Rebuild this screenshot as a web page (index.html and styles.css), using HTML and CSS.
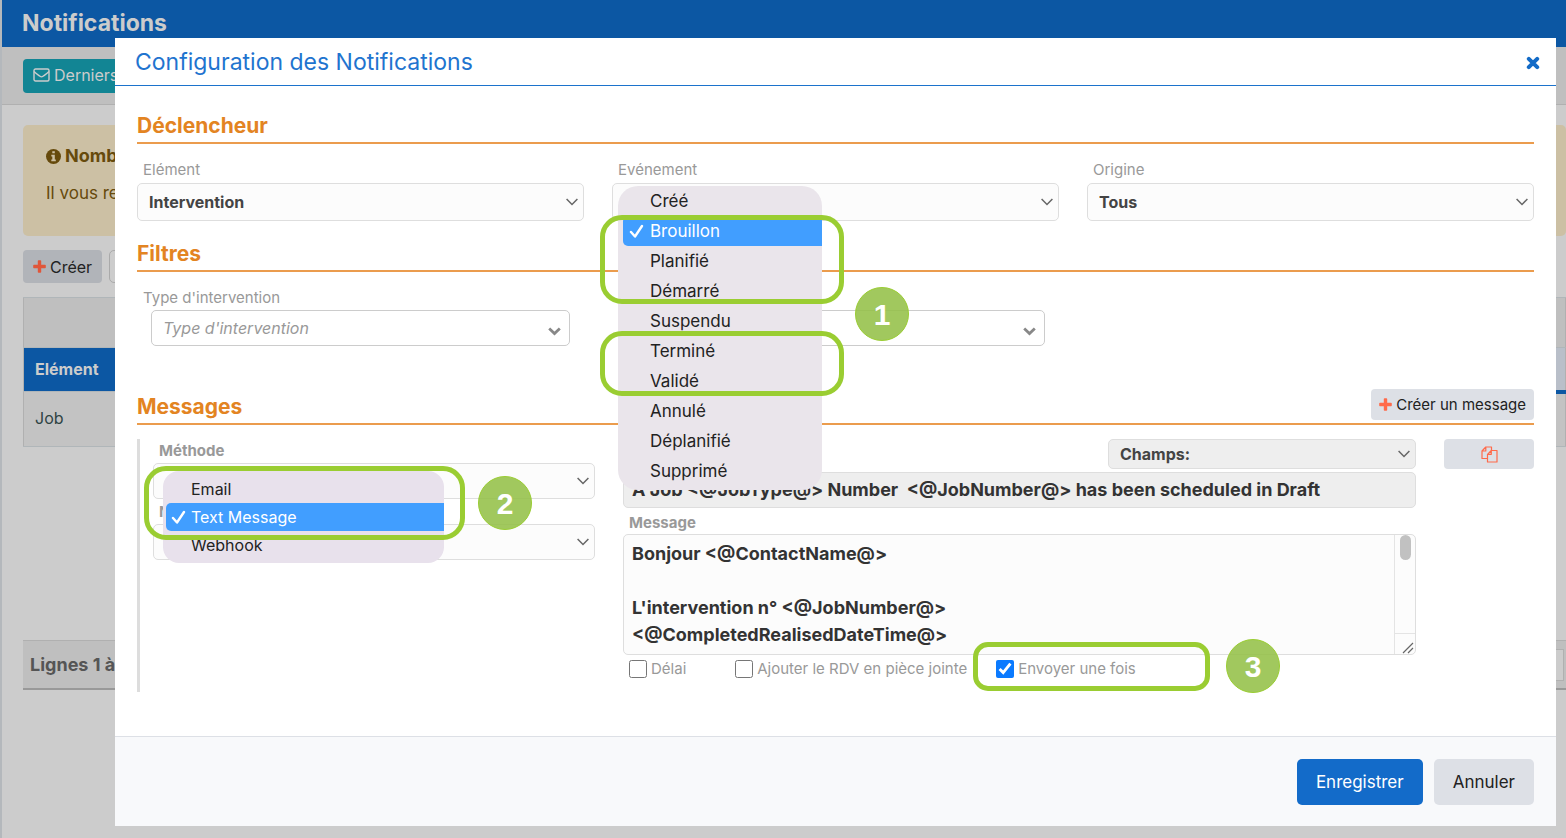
FILE: index.html
```
<!DOCTYPE html>
<html lang="fr">
<head>
  <meta charset="UTF-8" />
  <meta name="viewport" content="width=device-width, initial-scale=1" />
  <title>Notifications</title>
  <link rel="stylesheet" href="styles.css">
</head>
<body>

  <div class="page">
    <header class="page-header">
      <h1>Notifications</h1>
    </header>

    <div class="toolbar">
      <button type="button" class="btn-info">
        <svg width="17" height="14" viewBox="0 0 17 14" fill="none" stroke="currentColor" stroke-width="1.4">
          <rect x="1" y="1" width="15" height="12" rx="1.5" />
          <path d="M1 3.5C3 5.5 5 6.800 7 8.300c1 .8 2 .8 3 0C12 6.800 14 5.500 16 3.500" />
        </svg>
        Derniers
      </button>
    </div>

    <main class="page-main">
      <div class="alert">
        <p class="alert-title">
          <svg width="15" height="15" viewBox="0 0 15 15">
            <circle cx="7.500" cy="7.500" r="7.500" fill="currentColor" />
            <path d="M6.300 2.300h2.500v2H6.300zM5.300 5.700h3.500v4.800h1v1.800H5.300v-1.800h1V7.400h-1z" fill="#ccc0a4" />
          </svg>
          Nombre
        </p>
        <p>Il vous reste</p>
      </div>

      <div class="actions">
        <button type="button" class="btn-grey">
          <svg class="plus" width="13" height="13" viewBox="0 0 13 13"><path d="M4.800 1q0-.8.8-.8h1.800q.8 0 .8.8v3.800H12q.8 0 .8.800v1.800q0 .8-.8.8H8.200V12q0 .8-.8.8H5.600q-.8 0-.8-.8V8.200H1q-.8 0-.8-.8V5.600q0-.8.8-.8h3.800z" /></svg>
          Créer
        </button>
        <input type="search" class="search" aria-label="Rechercher">
      </div>

      <table class="list">
        <thead>
          <tr class="list-top"><td colspan="2"></td></tr>
          <tr><th>Elément</th><th class="list-last"></th></tr>
        </thead>
        <tbody>
          <tr><td>Job</td><td></td></tr>
        </tbody>
      </table>

      <div class="list-footer">
        <span>Lignes 1 à</span>
        <span class="pager"></span>
      </div>
    </main>
  </div>

  <div class="modal" role="dialog" aria-labelledby="modalTitle">
    <div class="modal-header">
      <h2 id="modalTitle">Configuration des Notifications</h2>
      <button type="button" class="close" aria-label="Fermer">
        <svg width="14" height="14" viewBox="0 0 14 14"><path d="M2.800 2.800l8.400 8.400M11.200 2.800l-8.400 8.400" stroke="currentColor" stroke-width="4" stroke-linecap="round" /></svg>
      </button>
    </div>

    <form class="modal-body">
      <h3>Déclencheur</h3>
      <div class="row row-trigger">
        <div class="field">
          <label for="element">Elément</label>
          <select id="element"><option>Intervention</option></select>
        </div>
        <div class="field">
          <label for="event">Evénement</label>
          <select id="event"><option></option></select>
          <div class="menu menu-event">
            <ul>
              <li>Créé</li>
              <li class="selected"><svg class="check" width="15" height="14" viewBox="0 0 15 14"><path d="M2 8l4 4.500L13 2" /></svg>Brouillon</li>
              <li>Planifié</li>
              <li>Démarré</li>
              <li>Suspendu</li>
              <li>Terminé</li>
              <li>Validé</li>
              <li>Annulé</li>
              <li>Déplanifié</li>
              <li>Supprimé</li>
            </ul>
            <span class="mark mark-start"></span>
            <span class="mark mark-end"></span>
            <span class="step step-1">1</span>
          </div>
        </div>
        <div class="field">
          <label for="origin">Origine</label>
          <select id="origin"><option>Tous</option></select>
        </div>
      </div>

      <h3>Filtres</h3>
      <div class="row row-filters">
        <div class="field">
          <label for="jobType">Type d'intervention</label>
          <select id="jobType" class="filter"><option>Type d'intervention</option></select>
        </div>
        <div class="field">
          <select class="filter" aria-label="Filtre"><option></option></select>
        </div>
      </div>

      <div class="title-row">
        <h3>Messages</h3>
        <button type="button" class="btn-grey btn-message">
          <svg class="plus" width="13" height="13" viewBox="0 0 13 13"><path d="M4.800 1q0-.8.8-.8h1.800q.8 0 .8.8v3.800H12q.8 0 .8.800v1.800q0 .8-.8.8H8.200V12q0 .8-.8.8H5.600q-.8 0-.8-.8V8.200H1q-.8 0-.8-.8V5.600q0-.8.8-.8h3.800z" /></svg>
          Créer un message
        </button>
      </div>

      <div class="message">
        <div class="message-method">
          <div class="field">
            <label for="method">Méthode</label>
            <select id="method"><option></option></select>
            <div class="menu menu-method">
              <ul>
                <li>Email</li>
                <li class="selected"><svg class="check" width="15" height="14" viewBox="0 0 15 14"><path d="M2 8l4 4.500L13 2" /></svg>Text Message</li>
                <li>Webhook</li>
              </ul>
              <span class="mark mark-method"></span>
              <span class="step step-2">2</span>
            </div>
          </div>
          <div class="field">
            <label for="number">N°</label>
            <select id="number"><option></option></select>
          </div>
        </div>

        <div class="message-content">
          <select class="fields" aria-label="Champs"><option>Champs:</option></select>
          <input type="text" class="subject" aria-label="Sujet" value="A Job &lt;@JobType@&gt; Number  &lt;@JobNumber@&gt; has been scheduled in Draft">
          <label for="text">Message</label>
          <div class="text-box">
            <textarea id="text" rows="4">Bonjour &lt;@ContactName@&gt;

L'intervention n° &lt;@JobNumber@&gt;
&lt;@CompletedRealisedDateTime@&gt;</textarea>
            <div class="scroll">
              <span class="thumb"></span>
              <svg class="grip" width="21" height="21" viewBox="0 0 21 21"><path d="M0 .5h21" stroke="#e4e4e4" /><path d="M9 20L19 10M14 20l5-5" stroke="#666" stroke-width="1.200" /></svg>
            </div>
          </div>
          <div class="options">
            <label><input type="checkbox"> Délai</label>
            <label><input type="checkbox"> Ajouter le RDV en pièce jointe</label>
            <label class="once"><input type="checkbox" checked> Envoyer une fois
              <span class="mark mark-once"></span>
              <span class="step step-3">3</span>
            </label>
          </div>
        </div>

        <button type="button" class="btn-grey btn-copy" aria-label="Dupliquer">
          <svg width="17" height="17" viewBox="0 0 17 17" fill="none" stroke="#ff6a4a" stroke-width="1.200" stroke-linejoin="round">
            <path d="M6.500 12.500H1V5l3.800-4h5.700v3.500M1 5h3.800V1" />
            <path d="M10.300 4.500H16V16H6.500V8.300zM6.500 8.300h3.800V4.500" />
          </svg>
        </button>
      </div>
    </form>

    <div class="modal-footer">
      <button type="button" class="btn btn-save">Enregistrer</button>
      <button type="button" class="btn btn-cancel">Annuler</button>
    </div>
  </div>

</body>
</html>
```
FILE: styles.css
```
* {
  box-sizing: border-box;
}
body {
  margin: 0;
  font-family: Inter, "Liberation Sans", sans-serif;
  font-size: 16px;
  line-height: 20px;
  color: #333;
  background: #ccc;
}
h1, h2, h3, p, ul {
  margin: 0;
  padding: 0;
}
button, input, select, textarea {
  font-family: inherit;
  font-size: inherit;
  margin: 0;
}
button {
  border: 0;
  border-radius: 4px;
  cursor: pointer;
}

/* page behind the dialog */
.page {
  min-height: 100vh;
  border-left: 2px solid #b4b8bc;
  overflow: hidden;
}
.page-header {
  height: 47px;
  padding: 0 20px 2px;
  display: flex;
  align-items: center;
  background: #0c57a3;
}
.page-header h1 {
  font-size: 23px;
  line-height: 28px;
  color: #ccc;
}
.toolbar {
  padding: 12px 21px 11px;
  background: #bfbfbf;
  border-bottom: 1px solid #b0b0b0;
}
.btn-info {
  display: flex;
  align-items: center;
  gap: 4px;
  width: 240px;
  height: 34px;
  padding: 0 10px 2px;
  background: #128594;
  color: #ccc;
}
.page-main {
  padding: 20px 0 0 21px;
}
.alert {
  height: 111px;
  padding: 21px 23px;
  display: flex;
  flex-direction: column;
  gap: 17px;
  background: #ccc0a4;
  border-radius: 5px;
  color: #664a0c;
  font-size: 17px;
}
.alert-title {
  display: flex;
  align-items: center;
  gap: 4px;
  font-size: 18px;
  font-weight: 700;
}
.actions {
  display: flex;
  gap: 7px;
  padding: 14px 0;
}
.btn-grey {
  display: flex;
  align-items: center;
  justify-content: center;
  gap: 4px;
  height: 33px;
  padding: 0 10px;
  background: #b1b4b9;
  color: #222;
}
.plus {
  fill: #e0563a;
}
.search {
  width: 260px;
  border: 1px solid #aaa;
  border-radius: 5px;
  background: #ccc;
}
.list {
  width: 100%;
  border-collapse: collapse;
  border: 1px solid #b0b0b0;
  background: #c3c3c3;
  color: #2f4444;
}
.list th, .list td {
  padding: 0 11px 2px;
  text-align: left;
}
.list th {
  height: 44px;
  background: #0c57a3;
  color: #ccc;
}
.list td {
  height: 55px;
  border: 1px solid #b0b6b9;
  border-width: 1px 0;
}
.list .list-top td {
  height: 50px;
  background: #bfbfbf;
}
.list .list-last {
  width: 30px;
  background: #b9bfc9;
  border-bottom: 4px solid #0c57a3;
}
.list-footer {
  height: 50px;
  margin-top: 193px;
  padding: 0 2px 0 7px;
  display: flex;
  align-items: center;
  justify-content: space-between;
  border-top: 1px solid #b0b0b0;
  border-bottom: 2px solid #999;
  background: #bfbfbf;
  color: #555;
  font-size: 18px;
  font-weight: 700;
}
.pager {
  width: 40px;
  height: 32px;
  background: #ccc;
  border: 1px solid #b0b0b0;
}

/* dialog */
.modal {
  position: absolute;
  top: 38px;
  left: 115px;
  right: 10px;
  background: #fff;
}
.modal-header {
  height: 48px;
  padding: 0 15px 0 20px;
  display: flex;
  align-items: center;
  justify-content: space-between;
  border-bottom: 1px solid #1c73cc;
}
.modal-header h2 {
  font-size: 23px;
  line-height: 30px;
  font-weight: 400;
  color: #1f74cf;
}
.close {
  display: flex;
  padding: 2px 1px 0;
  background: none;
  color: #136bc7;
}
.modal-body {
  height: 650px;
  padding: 26px 22px 0;
}
h3 {
  height: 32px;
  border-bottom: 2px solid #eb9c4d;
  font-size: 21px;
  line-height: 27px;
  color: #e38422;
}
.row {
  display: grid;
  grid-template-columns: 1fr 1fr 1fr;
  gap: 28px;
}
.row-trigger {
  padding: 16px 0 19px;
}
.row-filters {
  padding: 16px 0 47px;
}
.field {
  position: relative;
  display: flex;
  flex-direction: column;
  justify-content: flex-end;
}
label {
  padding-left: 6px;
  font-size: 15px;
  line-height: 20px;
  color: #999;
}
.row-trigger label {
  margin-bottom: 3px;
}
select {
  width: 100%;
  height: 38px;
  padding: 0 36px 1px 11px;
  appearance: none;
  border: 1px solid #dedede;
  border-radius: 5px;
  background: #fcfcfc url("data:image/svg+xml,%3Csvg xmlns='http://www.w3.org/2000/svg' width='12' height='8' fill='none' stroke='%23666' stroke-width='1.5'%3E%3Cpath d='M.6 1l5.400 5.500L11.400 1'/%3E%3C/svg%3E") no-repeat right 5px center;
  color: #444;
  font-weight: 700;
}
select.filter {
  width: auto;
  height: 36px;
  margin: 2px 14px 0;
  border-color: #ccc;
  background: #fff url("data:image/svg+xml,%3Csvg xmlns='http://www.w3.org/2000/svg' width='13' height='9' fill='none' stroke='%23888' stroke-width='2.800'%3E%3Cpath d='M1.200 1.500l5.300 5 5.300-5'/%3E%3C/svg%3E") no-repeat right 8px top 16px;
  color: #999;
  font-weight: 400;
  font-style: italic;
}
.title-row {
  position: relative;
}
.btn-message {
  position: absolute;
  right: 0;
  top: -4px;
  height: 31px;
  padding: 0 8px 1px;
  font-size: 15px;
}
.modal .btn-grey {
  background: #dde0e6;
}
.modal .plus {
  fill: #ff6a4a;
}
.message {
  display: flex;
  align-items: flex-start;
  gap: 28px;
  height: 253px;
  margin-top: 14px;
  padding-left: 13px;
  border-left: 3px solid #ddd;
}
.message-method {
  flex: 442;
  padding-top: 2px;
}
.message-method .field {
  margin-bottom: 3px;
}
.message-method label, .message-content > label {
  font-weight: 700;
}
.message-method label {
  margin-bottom: 2px;
}
.message-method select {
  height: 36px;
}
.message-content {
  flex: 793;
  display: flex;
  flex-direction: column;
}
.btn-copy {
  width: 90px;
  height: 30px;
}
.message select.fields {
  width: 308px;
  height: 30px;
  align-self: flex-end;
  background-color: #eee;
}
.subject {
  height: 36px;
  margin: 3px 0 5px;
  padding: 0 8px 2px;
  border: 1px solid #dedede;
  border-radius: 5px;
  background: #eee;
  color: #333;
  font-size: 18px;
  font-weight: 700;
  white-space: pre;
}
.text-box {
  position: relative;
  display: flex;
  margin-top: 1px;
}
textarea {
  width: 100%;
  height: 121px;
  padding: 5px 28px 5px 8px;
  border: 1px solid #dedede;
  border-radius: 5px;
  background: #fcfcfc;
  color: #333;
  font-size: 18px;
  font-weight: 700;
  line-height: 27px;
  resize: none;
  overflow: hidden;
}
.scroll {
  position: absolute;
  top: 1px;
  right: 1px;
  bottom: 1px;
  width: 21px;
  border-left: 1px solid #e4e4e4;
}
.thumb {
  display: block;
  width: 11px;
  height: 25px;
  margin: 0 auto;
  border-radius: 6px;
  background: #c1c1c1;
}
.grip {
  position: absolute;
  right: 0;
  bottom: 0;
}
.options {
  display: flex;
  padding-top: 4px;
}
.options label {
  position: relative;
  display: flex;
  align-items: center;
  gap: 4px;
  margin-right: 43px;
  white-space: nowrap;
}
.options .once {
  margin-left: -20px;
}
input[type="checkbox"] {
  width: 18px;
  height: 18px;
  accent-color: #0a7aff;
}

/* open drop-down lists */
.menu {
  position: absolute;
  z-index: 2;
  background: #eae5eb;
  color: #222;
}
.menu ul {
  list-style: none;
}
.menu li {
  position: relative;
  display: flex;
  align-items: center;
}
.menu .selected {
  border-radius: 5px 0 0 5px;
  background: #419eff;
  color: #fff;
}
.check {
  position: absolute;
  left: 6px;
  fill: none;
  stroke: #fff;
  stroke-width: 2.400;
  stroke-linecap: round;
  stroke-linejoin: round;
}
.menu-event {
  top: 26px;
  left: 6px;
  width: 204px;
  padding-bottom: 4px;
  border-radius: 20px;
  font-size: 17px;
}
.menu-event li {
  height: 30px;
  margin-left: 5px;
  padding-left: 27px;
}
.menu-method {
  top: 30px;
  left: 10px;
  width: 281px;
  padding: 4px 0;
  border-radius: 16px;
  background: #e8e1ec;
}
.menu-method li {
  height: 28px;
  margin-left: 3px;
  padding-left: 25px;
}
.menu-method .check {
  left: 5px;
}

/* annotations */
.mark {
  position: absolute;
  border: 5px solid #9acd32;
  border-radius: 22px;
}
.mark-start, .mark-end {
  left: -18px;
  right: -22px;
}
.mark-start {
  top: 29px;
  height: 89px;
}
.mark-end {
  top: 145px;
  height: 65px;
}
.mark-method {
  top: -5px;
  left: -19px;
  right: -21px;
  height: 74px;
}
.mark-once {
  top: -17px;
  left: -17px;
  width: 237px;
  height: 49px;
  border-radius: 15px;
}
.step {
  position: absolute;
  width: 54px;
  height: 54px;
  border: 1px solid #9acd32;
  border-radius: 50%;
  background: rgba(148, 192, 72, 0.880);
  color: #fff;
  font-family: "Liberation Sans", Arial, sans-serif;
  font-size: 30px;
  font-weight: 700;
  line-height: 54px;
  text-align: center;
}
.step-1 {
  top: 101px;
  left: 237px;
}
.step-2 {
  top: 5px;
  left: 315px;
}
.step-3 {
  top: -20px;
  left: 236px;
}

.modal-footer {
  height: 90px;
  padding: 0 22px;
  display: flex;
  align-items: center;
  justify-content: flex-end;
  gap: 11px;
  border-top: 1px solid #dde0e6;
  background: #f8f9fb;
}
.btn {
  height: 46px;
  padding: 0 19px;
  border-radius: 5px;
  font-size: 17px;
}
.btn-save {
  background: #136bc9;
  color: #fff;
}
.btn-cancel {
  background: #dde0e6;
  color: #222;
}
```
